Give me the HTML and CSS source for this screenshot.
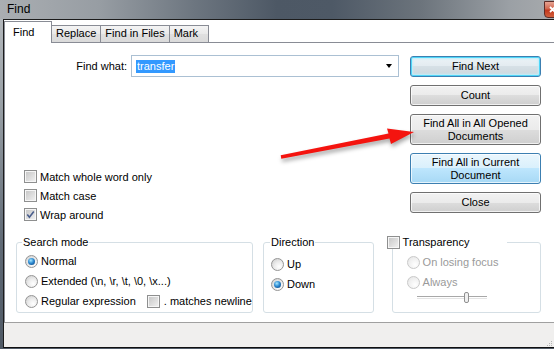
FILE: index.html
```html
<!DOCTYPE html>
<html lang="en">
  <head>
    <meta charset="UTF-8" />
    <title>Find</title>
    <link rel="stylesheet" href="styles.css">
  </head>
  <body>
    <div class="window">
      <div class="titlebar">
        <span class="title">Find</span>
        <span class="close-btn">
          <svg width="7" height="7" viewBox="0 0 7 7"><path d="M1 1 L6 6 M6 1 L1 6" stroke="#fff" stroke-width="1.8" /></svg>
        </span>
      </div>

      <div class="frame">
        <div class="tabs">
          <div class="tab active">Find</div>
          <div class="tab">Replace</div>
          <div class="tab">Find in Files</div>
          <div class="tab">Mark</div>
        </div>

        <div class="panel">
          <div class="top">
            <div class="left">
              <div class="find-row">
                <span class="find-label">Find what:</span>
                <div class="combo">
                  <span class="sel">transfer</span>
                  <span class="drop"></span>
                </div>
              </div>

              <div class="options">
                <div class="opt"><span class="check"></span>Match whole word only</div>
                <div class="opt"><span class="check"></span>Match case</div>
                <div class="opt">
                  <span class="check">
                    <svg width="9" height="9" viewBox="0 0 9 9"><path d="M1.3 4.6 L3.4 7.2 L7.8 1.4" fill="none" stroke="#4a5e8c" stroke-width="1.6" /></svg>
                  </span>Wrap around
                </div>
              </div>
            </div>

            <div class="buttons">
              <div class="btn default">Find Next</div>
              <div class="btn">Count</div>
              <div class="btn tall">Find All in All Opened<br />Documents</div>
              <div class="btn tall hot">Find All in Current<br />Document</div>
              <div class="btn">Close</div>
            </div>
          </div>

          <div class="groups">
            <div class="group group-search">
              <span class="legend">Search mode</span>
              <div class="rows">
                <div class="radio-row"><span class="radio on"><span class="dot"></span></span>Normal</div>
                <div class="radio-row"><span class="radio"></span>Extended (\n, \r, \t, \0, \x...)</div>
                <div class="radio-row">
                  <span class="radio"></span>Regular expression
                  <span class="check newline"></span>. matches newline
                </div>
              </div>
            </div>

            <div class="group group-direction">
              <span class="legend">Direction</span>
              <div class="rows">
                <div class="radio-row"><span class="radio"></span>Up</div>
                <div class="radio-row"><span class="radio on"><span class="dot"></span></span>Down</div>
              </div>
            </div>

            <div class="group group-trans">
              <span class="legend legend-check"><span class="check"></span>Transparency</span>
              <div class="rows">
                <div class="radio-row disabled"><span class="radio"></span>On losing focus</div>
                <div class="radio-row disabled"><span class="radio"></span>Always</div>
                <div class="slider-row">
                  <div class="slider"><span class="thumb"></span></div>
                </div>
              </div>
            </div>
          </div>
        </div>

        <div class="status">
          <svg class="grip" width="8" height="8" viewBox="0 0 8 8">
            <rect x="6" y="2" width="1" height="1" fill="#b4b4b4" />
            <rect x="4" y="4" width="1" height="1" fill="#b4b4b4" />
            <rect x="6" y="4" width="1" height="1" fill="#b4b4b4" />
            <rect x="2" y="6" width="1" height="1" fill="#b4b4b4" />
            <rect x="4" y="6" width="1" height="1" fill="#b4b4b4" />
            <rect x="6" y="6" width="1" height="1" fill="#b4b4b4" />
          </svg>
        </div>
      </div>
    </div>

    <!-- annotation arrow drawn over the dialog -->
    <svg class="arrow-mark" width="554" height="349" viewBox="0 0 554 349">
      <polygon points="280.7,155.3 388.5,133.5 387,128.5 414,132 391,144 389.5,138.5 281.3,158.7" fill="#f4140f" />
    </svg>
  </body>
</html>
```

FILE: styles.css
```css
* {
  box-sizing: border-box;
}
body {
  margin: 0;
  width: 554px;
  height: 349px;
  overflow: hidden;
  position: relative;
  font-family: "Liberation Sans", Arial, sans-serif;
  font-size: 11px;
  color: #000;
}
.window {
  display: flex;
  flex-direction: column;
  height: 349px;
  background: linear-gradient(to bottom, #b8bcc0 0%, #99a0a6 30%, #5f6975 70%, #4f5965 100%);
}

/* title bar */
.titlebar {
  display: flex;
  justify-content: space-between;
  align-items: flex-start;
  height: 19px;
  overflow: hidden;
  background: linear-gradient(to right, #aaaeb2 0%, #979da3 18%, #6d7680 35%, #4d5865 50%, #4e5966 60%, #6c747c 76%, #9ba0a5 92%, #a7aaad 100%);
}
.title {
  font-size: 12px;
  line-height: 18px;
  padding-left: 7px;
}
.close-btn {
  display: flex;
  align-items: center;
  width: 43px;
  height: 17px;
  margin: 1px -33px 0 0;
  padding-left: 4px;
  border: 1px solid #5d2d28;
  border-radius: 0 0 0 4px;
  background: linear-gradient(#e8a493, #d0674f 45%, #c1381d 55%, #d35f3b);
}

/* client frame */
.frame {
  flex: 1;
  display: flex;
  flex-direction: column;
  margin: 0 0 1px 3px;
  border-left: 1px solid #1c1c1c;
  border-top: 1px solid #1c1c1c;
  border-bottom: 1px solid #101010;
  background: #fff;
}
.tabs {
  display: flex;
  align-items: flex-end;
  height: 23px;
  padding-top: 1px;
  border-bottom: 1px solid #898c95;
}
.tab {
  height: 17px;
  min-width: 40px;
  margin-left: -1px;
  padding: 0 4px;
  border: 1px solid #898c95;
  border-bottom: none;
  background: linear-gradient(#f4f4f4, #e9e9e9 50%, #e0e0e0 50%, #dadada);
  line-height: 15px;
}
.tab.active {
  position: relative;
  z-index: 1;
  width: 48px;
  height: 22px;
  margin: 0 0 -1px 0;
  padding: 0 8px;
  background: #fff;
  line-height: 20px;
}

/* tab page */
.panel {
  flex: 1;
  display: flex;
  flex-direction: column;
  padding: 0 13px 0 11px;
  border-left: 1px solid #898c95;
  border-bottom: 1px solid #a0a0a0;
}
.top {
  display: flex;
  gap: 11px;
}
.left {
  flex: 1;
}
.find-row {
  display: flex;
  align-items: center;
  gap: 4px;
  margin-top: 12px;
}
.find-label {
  width: 111px;
  text-align: right;
}
.combo {
  display: flex;
  align-items: center;
  justify-content: space-between;
  width: 268px;
  height: 22px;
  padding: 0 6px 0 4px;
  border: 1px solid #abc0d3;
}
.sel {
  padding: 0 1px;
  background: #3399ff;
  color: #fff;
  line-height: 13px;
}
.drop {
  width: 0;
  height: 0;
  border-left: 3.5px solid transparent;
  border-right: 3.5px solid transparent;
  border-top: 4px solid #000;
}
.options {
  margin-top: 90px;
  padding-left: 8px;
}
.opt {
  display: flex;
  align-items: center;
  gap: 3px;
  height: 19px;
}
.check {
  display: flex;
  align-items: center;
  justify-content: center;
  flex: none;
  width: 13px;
  height: 13px;
  border: 1px solid #8e8f8f;
  background: linear-gradient(135deg, #c4c4c4, #f3f3f3);
  box-shadow: inset 0 0 0 1px #f6f6f6;
}

/* buttons */
.buttons {
  display: flex;
  flex-direction: column;
  gap: 8px;
  width: 132px;
  margin-top: 13px;
}
.btn {
  display: flex;
  align-items: center;
  justify-content: center;
  height: 21px;
  border: 1px solid #707070;
  border-radius: 3px;
  background: linear-gradient(#f2f2f2, #ebebeb 50%, #dddddd 50%, #cfcfcf);
  box-shadow: inset 0 0 0 1px rgba(255, 255, 255, 0.7);
  text-align: center;
  line-height: 13px;
}
.btn.tall {
  height: 31px;
}
.btn.default {
  border-color: #3c7fb1;
  background: linear-gradient(#ecf3f7, #e3ebf0 50%, #d6e0e6 50%, #ccd7dd);
  box-shadow: inset 0 0 0 1px #4fd6f8, inset 0 0 2px 2px #bfeefb;
}
.btn.hot {
  border-color: #3c7fb1;
  background: linear-gradient(#eaf6fd, #d9f0fc 50%, #bee6fd 50%, #a7d9f5);
}

/* group boxes */
.groups {
  display: flex;
  margin-top: 18px;
}
.group {
  display: flex;
  flex-direction: column;
  height: 71px;
  border: 1px solid #d5dfe5;
  border-radius: 3px;
}
.legend {
  align-self: flex-start;
  margin-top: -7px;
  padding: 0 1px;
  background: #fff;
  line-height: 13px;
}
.group-search {
  width: 238px;
  margin-right: 10px;
  padding-left: 8px;
}
.group-search .legend {
  margin-left: -3px;
}
.group-search .rows {
  margin-top: 2px;
}
.group-direction {
  width: 111px;
  margin-right: 18px;
  padding-left: 7px;
}
.group-direction .legend {
  margin-left: -1px;
}
.group-direction .rows {
  margin-top: 5px;
}
.group-trans {
  width: 150px;
  padding-left: 14px;
}
.legend-check {
  display: flex;
  align-items: center;
  gap: 3px;
  margin-left: -20px;
  padding: 0 38px 0 0;
}
.group-trans .rows {
  margin-top: 3px;
}
.radio-row {
  display: flex;
  align-items: center;
  gap: 3px;
  height: 20px;
  white-space: nowrap;
}
.check.newline {
  margin: 0 1px 0 8px;
}
.radio {
  display: flex;
  align-items: center;
  justify-content: center;
  flex: none;
  width: 13px;
  height: 13px;
  border: 1px solid #959595;
  border-radius: 50%;
  background: radial-gradient(circle at 65% 70%, #ffffff 0%, #ececec 45%, #c8c8c8 100%);
}
.dot {
  width: 7px;
  height: 7px;
  border-radius: 50%;
  background: radial-gradient(circle at 40% 35%, #a6e8ff, #2f8bd2 45%, #0b4684 90%);
}
.disabled {
  color: #9a9a9a;
}
.disabled .radio {
  border-color: #c9c9c9;
  background: radial-gradient(circle at 65% 70%, #ffffff, #efefef 60%, #e2e2e2);
}
.slider-row {
  display: flex;
  align-items: center;
  height: 10px;
  padding-left: 10px;
}
.slider {
  display: flex;
  align-items: center;
  width: 70px;
  height: 3px;
  border-top: 1px solid #a8a8a8;
  border-bottom: 1px solid #e4e4e4;
}
.thumb {
  width: 5px;
  height: 11px;
  margin-left: 47px;
  border: 1px solid #909090;
  border-radius: 2px;
  background: #f0f0f0;
}

/* bottom strip */
.status {
  display: flex;
  justify-content: flex-end;
  align-items: flex-end;
  height: 24px;
  padding: 0 1px 0 0;
  background: #f0efee;
}
.arrow-mark {
  position: absolute;
  left: 0;
  top: 0;
  pointer-events: none;
  filter: drop-shadow(1px 3px 2px rgba(0, 0, 0, 0.35));
}
```
